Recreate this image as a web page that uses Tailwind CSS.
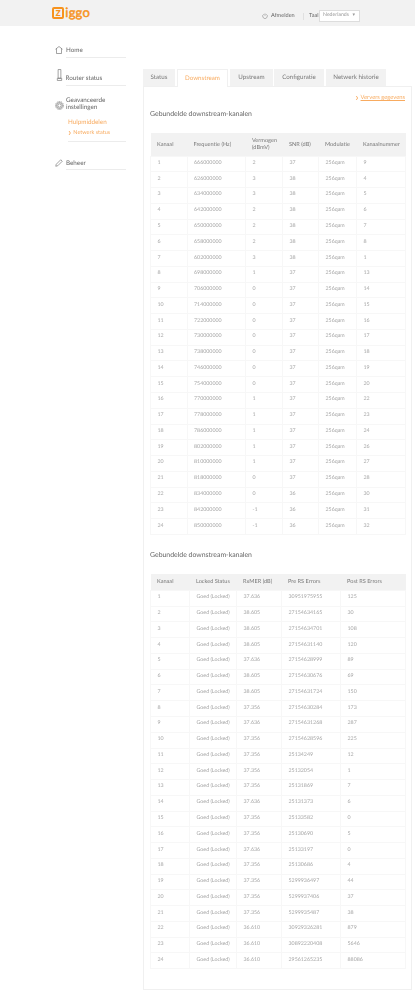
<!DOCTYPE html>
<html lang="nl">
<head>
<meta charset="utf-8">
<title>Ziggo</title>
<script src="https://cdn.jsdelivr.net/npm/@tailwindcss/browser@4"></script>
</head>
<body class="bg-white font-['Lato','Open_Sans',sans-serif] text-[#666] h-[1000px] overflow-hidden [text-rendering:geometricPrecision]">
<div class="blur-[0.35px]">
<header class="h-[26px] bg-[#f2f2f2] flex items-start pl-[52px]">
  <div class="mt-[7px] flex items-center h-[12px] w-[38px] text-[#f7931e] leading-none">
    <span class="flex items-center justify-center h-[12px] w-[13px] border-[2px] border-[#f7931e] rounded-[2px] text-[11.500px] font-bold">z</span>
    <span class="text-[13px] ml-[1px] tracking-[0.2px] -mt-[1px] [-webkit-text-stroke:0.5px_#f7931e]">iggo</span>
  </div>
  <div class="ml-[172px] mt-[12px] flex items-center h-[8px] text-[5.600px]">
    <svg class="w-[6px] h-[6px] text-[#777]" viewBox="0 0 12 12" fill="none" stroke="currentColor" stroke-width="1"><path d="M3.800 2.400a4.600 4.600 0 1 0 4.400 0M6 1v4.500"/></svg>
    <span class="ml-[3px] w-[32px]">Afmelden</span>
    <span class="w-px h-[7px] bg-[#e0e0e0]"></span>
    <span class="ml-[5px] w-[10px]">Taal</span>
    <span class="flex items-center justify-between w-[41px] h-[12px] bg-white border border-[#ddd] pl-[3px] pr-[4px] text-[#999] text-[5.200px]">Nederlands<span class="text-[5px]">▾</span></span>
  </div>
</header>
<main class="flex">
  <aside class="w-[143px] shrink-0 pl-[55px] pr-[17px] text-[6.300px]">
    <div class="mt-[20px] flex items-center h-[8px]">
      <svg class="w-[8px] h-[8px] text-[#666]" viewBox="0 0 16 16" fill="none" stroke="currentColor" stroke-width="1.200"><path d="M1 6.500l7-5.500 7 5.500M3 5v10h10V5"/></svg>
      <span class="ml-[3px] mt-[1px] leading-[8px]">Home</span>
    </div>
    <div class="ml-[11px] mt-[3px] border-b border-[#ececec] h-[1px]"></div>
    <div class="mt-[11px] flex items-end h-[12px]">
      <svg class="w-[7px] h-[12px] ml-[0.500px] text-[#666]" viewBox="0 0 12 22" fill="none" stroke="currentColor" stroke-width="1.100"><path d="M3.500 1h5v16h-5zM2 17h8v4H2z"/></svg>
      <span class="ml-[3px] -mb-[1px] leading-[6px]">Router status</span>
    </div>
    <div class="ml-[11px] mt-[4px] border-b border-[#ececec] h-[1px]"></div>
    <div class="mt-[10px] flex items-center h-[15px]">
      <svg class="w-[9px] h-[9px] mt-[3px] -ml-[0.500px] text-[#666]" viewBox="0 0 18 18" fill="none" stroke="currentColor" stroke-width="1.200"><circle cx="9" cy="9" r="3.500"/><circle cx="9" cy="9" r="6"/><circle cx="9" cy="9" r="8" stroke-dasharray="2.500 1.500"/></svg>
      <span class="ml-[2.500px] leading-[7px]">Geavanceerde<br>instellingen</span>
    </div>
    <div class="ml-[13px] mt-[8px] text-[#f8ab60] leading-[8px]">Hulpmiddelen</div>
    <div class="ml-[13px] mt-[2px] flex items-center text-[#f8ab60] text-[5.500px] leading-[8px]"><span class="text-[4px] mr-[2px]">❯</span>Netwerk status</div>
    <div class="ml-[13px] mt-[4px] border-b border-[#ececec] h-[1px]"></div>
    <div class="mt-[16px] flex items-center h-[9px]">
      <svg class="w-[8px] h-[8px] text-[#666]" viewBox="0 0 16 16" fill="none" stroke="currentColor" stroke-width="1.200"><path d="M1.500 14.500l1-4L11.500 1.500l3 3-9 9z"/></svg>
      <span class="ml-[3px] mt-[1px] leading-[9px]">Beheer</span>
    </div>
    <div class="ml-[11px] mt-[2px] border-b border-[#ececec] h-[1px]"></div>
  </aside>
  <section class="w-[269px] shrink-0 mt-[43px]">
    <nav class="flex h-[17px] text-[6.200px] text-[#777] gap-[2px]">
      <div class="w-[32px] bg-[#f2f2f2] flex items-center justify-center">Status</div>
      <div class="w-[51px] h-[18px] bg-white border-x border-t border-[#f0f0f0] text-[#f8ab60] flex items-center justify-center relative z-10">Downstream</div>
      <div class="w-[43px] bg-[#f2f2f2] flex items-center justify-center">Upstream</div>
      <div class="w-[50px] bg-[#f2f2f2] flex items-center justify-center -ml-[1px]">Configuratie</div>
      <div class="w-[60px] bg-[#f2f2f2] flex items-center justify-center">Netwerk historie</div>
    </nav>
    <div class="border border-[#f0f0f0] h-[904px] px-[6px] pt-[7px]">
      <div class="flex justify-end items-center h-[8px] text-[5.800px] text-[#f8ab60]"><span class="text-[4px] mr-[2px]">❯</span><span class="underline">Ververs gegevens</span></div>
      <h2 class="mt-[7px] text-[6.900px] leading-[10px] text-[#666] font-normal">Gebundelde downstream-kanalen</h2>
      <table class="mt-[14px] w-[255px] table-fixed border-collapse text-[5.300px] text-[#a6a6a6] [&_td]:border [&_td]:border-[#f7f7f7] [&_td]:pl-[6.500px] [&_td]:h-[15.780px] [&_td]:p-0 [&_th]:pl-[6.500px] [&_th]:font-normal [&_th]:text-left [&_th]:text-[#777] [&_th]:text-[5.600px] [&_th]:leading-[7px]">
        <colgroup><col class="w-[36.500px]"><col class="w-[58.500px]"><col class="w-[37px]"><col class="w-[36px]"><col class="w-[38px]"><col class="w-[49px]"></colgroup>
        <thead><tr class="h-[23px] bg-[#f2f2f2]"><th>Kanaal</th><th>Frequentie (Hz)</th><th>Vermogen (dBmV)</th><th>SNR (dB)</th><th>Modulatie</th><th>Kanaalnummer</th></tr></thead>
        <tbody>
          <tr><td>1</td><td>666000000</td><td>2</td><td>37</td><td>256qam</td><td>9</td></tr>
          <tr><td>2</td><td>626000000</td><td>3</td><td>38</td><td>256qam</td><td>4</td></tr>
          <tr><td>3</td><td>634000000</td><td>3</td><td>38</td><td>256qam</td><td>5</td></tr>
          <tr><td>4</td><td>642000000</td><td>2</td><td>38</td><td>256qam</td><td>6</td></tr>
          <tr><td>5</td><td>650000000</td><td>2</td><td>38</td><td>256qam</td><td>7</td></tr>
          <tr><td>6</td><td>658000000</td><td>2</td><td>38</td><td>256qam</td><td>8</td></tr>
          <tr><td>7</td><td>602000000</td><td>3</td><td>38</td><td>256qam</td><td>1</td></tr>
          <tr><td>8</td><td>698000000</td><td>1</td><td>37</td><td>256qam</td><td>13</td></tr>
          <tr><td>9</td><td>706000000</td><td>0</td><td>37</td><td>256qam</td><td>14</td></tr>
          <tr><td>10</td><td>714000000</td><td>0</td><td>37</td><td>256qam</td><td>15</td></tr>
          <tr><td>11</td><td>722000000</td><td>0</td><td>37</td><td>256qam</td><td>16</td></tr>
          <tr><td>12</td><td>730000000</td><td>0</td><td>37</td><td>256qam</td><td>17</td></tr>
          <tr><td>13</td><td>738000000</td><td>0</td><td>37</td><td>256qam</td><td>18</td></tr>
          <tr><td>14</td><td>746000000</td><td>0</td><td>37</td><td>256qam</td><td>19</td></tr>
          <tr><td>15</td><td>754000000</td><td>0</td><td>37</td><td>256qam</td><td>20</td></tr>
          <tr><td>16</td><td>770000000</td><td>1</td><td>37</td><td>256qam</td><td>22</td></tr>
          <tr><td>17</td><td>778000000</td><td>1</td><td>37</td><td>256qam</td><td>23</td></tr>
          <tr><td>18</td><td>786000000</td><td>1</td><td>37</td><td>256qam</td><td>24</td></tr>
          <tr><td>19</td><td>802000000</td><td>1</td><td>37</td><td>256qam</td><td>26</td></tr>
          <tr><td>20</td><td>810000000</td><td>1</td><td>37</td><td>256qam</td><td>27</td></tr>
          <tr><td>21</td><td>818000000</td><td>0</td><td>37</td><td>256qam</td><td>28</td></tr>
          <tr><td>22</td><td>834000000</td><td>0</td><td>36</td><td>256qam</td><td>30</td></tr>
          <tr><td>23</td><td>842000000</td><td>-1</td><td>36</td><td>256qam</td><td>31</td></tr>
          <tr><td>24</td><td>850000000</td><td>-1</td><td>36</td><td>256qam</td><td>32</td></tr>
        </tbody>
      </table>
      <h2 class="mt-[15px] text-[6.900px] leading-[10px] text-[#666] font-normal">Gebundelde downstream-kanalen</h2>
      <table class="mt-[14px] w-[255px] table-fixed border-collapse text-[5.300px] text-[#a6a6a6] [&_td]:border [&_td]:border-[#f7f7f7] [&_td]:pl-[6.500px] [&_td]:h-[15.780px] [&_td]:p-0 [&_th]:pl-[6.500px] [&_th]:font-normal [&_th]:text-left [&_th]:text-[#777] [&_th]:text-[5.600px] [&_th]:leading-[7px]">
        <colgroup><col class="w-[39px]"><col class="w-[47px]"><col class="w-[45px]"><col class="w-[59px]"><col class="w-[65px]"></colgroup>
        <thead><tr class="h-[16.500px] bg-[#f2f2f2]"><th>Kanaal</th><th>Locked Status</th><th>RxMER (dB)</th><th>Pre RS Errors</th><th>Post RS Errors</th></tr></thead>
        <tbody>
          <tr><td>1</td><td>Goed (Locked)</td><td>37.636</td><td>30951975955</td><td>125</td></tr>
          <tr><td>2</td><td>Goed (Locked)</td><td>38.605</td><td>27154634165</td><td>30</td></tr>
          <tr><td>3</td><td>Goed (Locked)</td><td>38.605</td><td>27154634701</td><td>108</td></tr>
          <tr><td>4</td><td>Goed (Locked)</td><td>38.605</td><td>27154631140</td><td>120</td></tr>
          <tr><td>5</td><td>Goed (Locked)</td><td>37.636</td><td>27154628999</td><td>89</td></tr>
          <tr><td>6</td><td>Goed (Locked)</td><td>38.605</td><td>27154630676</td><td>69</td></tr>
          <tr><td>7</td><td>Goed (Locked)</td><td>38.605</td><td>27154631724</td><td>150</td></tr>
          <tr><td>8</td><td>Goed (Locked)</td><td>37.356</td><td>27154630284</td><td>173</td></tr>
          <tr><td>9</td><td>Goed (Locked)</td><td>37.636</td><td>27154631268</td><td>287</td></tr>
          <tr><td>10</td><td>Goed (Locked)</td><td>37.356</td><td>27154628596</td><td>225</td></tr>
          <tr><td>11</td><td>Goed (Locked)</td><td>37.356</td><td>25134249</td><td>12</td></tr>
          <tr><td>12</td><td>Goed (Locked)</td><td>37.356</td><td>25132054</td><td>1</td></tr>
          <tr><td>13</td><td>Goed (Locked)</td><td>37.356</td><td>25131869</td><td>7</td></tr>
          <tr><td>14</td><td>Goed (Locked)</td><td>37.636</td><td>25131373</td><td>6</td></tr>
          <tr><td>15</td><td>Goed (Locked)</td><td>37.356</td><td>25133582</td><td>0</td></tr>
          <tr><td>16</td><td>Goed (Locked)</td><td>37.356</td><td>25130690</td><td>5</td></tr>
          <tr><td>17</td><td>Goed (Locked)</td><td>37.636</td><td>25133197</td><td>0</td></tr>
          <tr><td>18</td><td>Goed (Locked)</td><td>37.356</td><td>25130686</td><td>4</td></tr>
          <tr><td>19</td><td>Goed (Locked)</td><td>37.356</td><td>5299936497</td><td>44</td></tr>
          <tr><td>20</td><td>Goed (Locked)</td><td>37.356</td><td>5299937406</td><td>37</td></tr>
          <tr><td>21</td><td>Goed (Locked)</td><td>37.356</td><td>5299935487</td><td>38</td></tr>
          <tr><td>22</td><td>Goed (Locked)</td><td>36.610</td><td>30929326281</td><td>879</td></tr>
          <tr><td>23</td><td>Goed (Locked)</td><td>36.610</td><td>30892220408</td><td>5646</td></tr>
          <tr><td>24</td><td>Goed (Locked)</td><td>36.610</td><td>29561265235</td><td>88086</td></tr>
        </tbody>
      </table>
    </div>
  </section>
</main>
</div>
</body>
</html>
